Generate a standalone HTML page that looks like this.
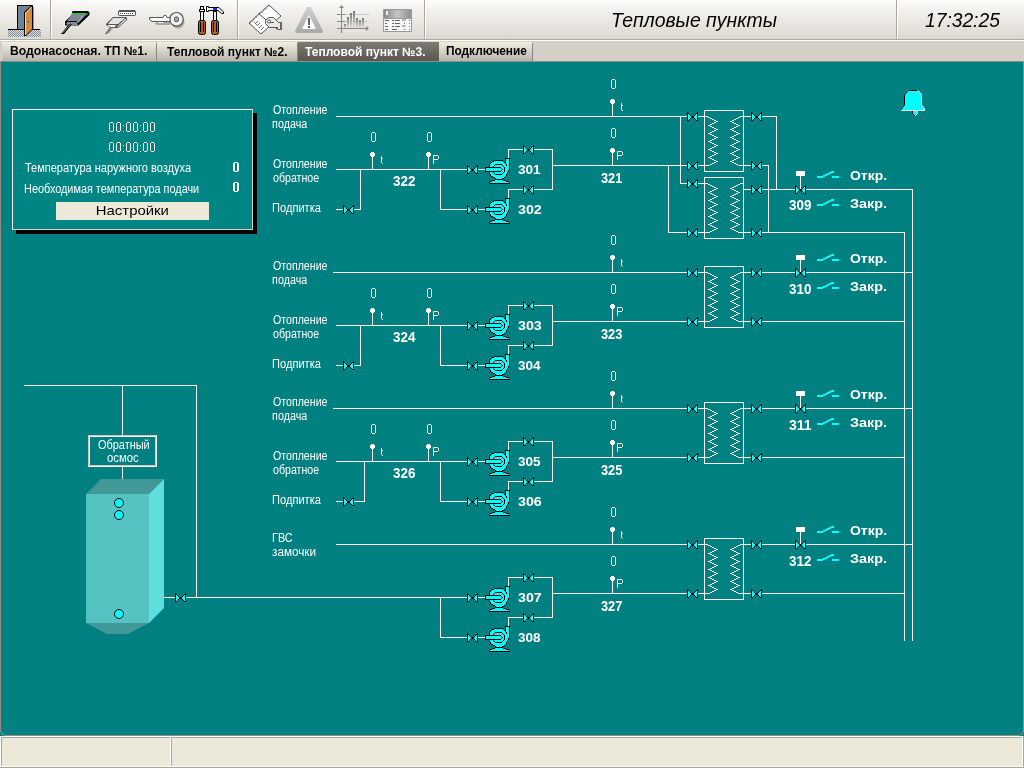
<!DOCTYPE html>
<html><head><meta charset="utf-8"><title>Тепловые пункты</title><style>
html,body{margin:0;padding:0;width:1024px;height:768px;overflow:hidden;background:#008080;}
svg{display:block;position:absolute;left:0;top:0;will-change:transform;}
text{font-family:"Liberation Sans",sans-serif;}
</style></head><body>
<svg width="1024" height="768" viewBox="0 0 1024 768">
<defs>
<linearGradient id="tbg" x1="0" y1="0" x2="0" y2="1">
<stop offset="0" stop-color="#fdfdfc"/><stop offset="0.1" stop-color="#f8f7f4"/><stop offset="1" stop-color="#dcd8d0"/>
</linearGradient>
<linearGradient id="tab" x1="0" y1="0" x2="0" y2="1">
<stop offset="0" stop-color="#f1eee0"/><stop offset="1" stop-color="#b8b5ad"/>
</linearGradient>
<linearGradient id="tabA" x1="0" y1="0" x2="0" y2="1">
<stop offset="0" stop-color="#7f7b73"/><stop offset="1" stop-color="#5a5650"/>
</linearGradient>
<pattern id="dith" x="0" y="0" width="2" height="2" patternUnits="userSpaceOnUse">
<rect x="0" y="0" width="1" height="1" fill="#7d8fa3"/><rect x="1" y="1" width="1" height="1" fill="#7d8fa3"/>
</pattern>
<g id="g0" fill="#fff"><rect x="1" y="0" width="3" height="1"/><rect x="0" y="1" width="1" height="8"/><rect x="4" y="1" width="1" height="8"/><rect x="1" y="9" width="3" height="1"/></g>
<g id="gcol" fill="#fff"><rect x="0" y="3" width="1" height="1"/><rect x="0" y="9" width="1" height="1"/></g>
<g id="gb0" fill="#fff"><rect x="1" y="0" width="4" height="1"/><rect x="0" y="1" width="2" height="8"/><rect x="4" y="1" width="2" height="8"/><rect x="1" y="9" width="4" height="1"/></g>
<g id="gt" fill="#fff"><rect x="0" y="0" width="1" height="7"/><rect x="1" y="2" width="1" height="1"/><rect x="1" y="7" width="1" height="1"/></g>
<g id="gP" fill="#fff"><rect x="0" y="0" width="1" height="9"/><rect x="1" y="0" width="4" height="1"/><rect x="5" y="1" width="1" height="3"/><rect x="1" y="4" width="4" height="1"/></g>
<g id="valve"><rect x="-5" y="-4" width="1" height="1" fill="#000"/><rect x="5" y="-4" width="1" height="1" fill="#000"/><rect x="-5" y="-3" width="2" height="1" fill="#000"/><rect x="4" y="-3" width="2" height="1" fill="#000"/><rect x="-5" y="-2" width="1" height="1" fill="#000"/><rect x="-4" y="-2" width="1" height="1" fill="#00ffff"/><rect x="-3" y="-2" width="1" height="1" fill="#000"/><rect x="3" y="-2" width="1" height="1" fill="#000"/><rect x="4" y="-2" width="1" height="1" fill="#00ffff"/><rect x="5" y="-2" width="1" height="1" fill="#000"/><rect x="-5" y="-1" width="1" height="1" fill="#000"/><rect x="-4" y="-1" width="2" height="1" fill="#00ffff"/><rect x="-2" y="-1" width="1" height="1" fill="#000"/><rect x="2" y="-1" width="1" height="1" fill="#000"/><rect x="3" y="-1" width="2" height="1" fill="#00ffff"/><rect x="5" y="-1" width="1" height="1" fill="#000"/><rect x="-5" y="0" width="1" height="1" fill="#000"/><rect x="-4" y="0" width="3" height="1" fill="#00ffff"/><rect x="-1" y="0" width="3" height="1" fill="#000"/><rect x="2" y="0" width="3" height="1" fill="#00ffff"/><rect x="5" y="0" width="1" height="1" fill="#000"/><rect x="-5" y="1" width="1" height="1" fill="#000"/><rect x="-4" y="1" width="3" height="1" fill="#00ffff"/><rect x="-1" y="1" width="3" height="1" fill="#000"/><rect x="2" y="1" width="3" height="1" fill="#00ffff"/><rect x="5" y="1" width="1" height="1" fill="#000"/><rect x="-5" y="2" width="1" height="1" fill="#000"/><rect x="-4" y="2" width="2" height="1" fill="#00ffff"/><rect x="-2" y="2" width="1" height="1" fill="#000"/><rect x="2" y="2" width="1" height="1" fill="#000"/><rect x="3" y="2" width="2" height="1" fill="#00ffff"/><rect x="5" y="2" width="1" height="1" fill="#000"/><rect x="-5" y="3" width="1" height="1" fill="#000"/><rect x="-4" y="3" width="1" height="1" fill="#00ffff"/><rect x="-3" y="3" width="1" height="1" fill="#000"/><rect x="3" y="3" width="1" height="1" fill="#000"/><rect x="4" y="3" width="1" height="1" fill="#00ffff"/><rect x="5" y="3" width="1" height="1" fill="#000"/><rect x="-5" y="4" width="2" height="1" fill="#000"/><rect x="4" y="4" width="2" height="1" fill="#000"/></g>
<g id="dot"><rect x="-1" y="-17" width="3" height="1" fill="#fff"/><rect x="-2" y="-16" width="5" height="3" fill="#fff"/><rect x="-1" y="-13" width="3" height="1" fill="#fff"/></g>
<g id="sw" fill="#00ffff"><rect x="817" y="0" width="6" height="2"/><rect x="823" y="-1" width="2" height="2"/><rect x="825" y="-2" width="2" height="2"/><rect x="827" y="-3" width="2" height="2"/><rect x="829" y="-4" width="2" height="2"/><rect x="831" y="-5" width="3" height="2"/><rect x="832" y="0" width="7" height="2"/></g>
<g id="pump"><rect x="20" y="0" width="5" height="1" fill="#000"/><rect x="20" y="1" width="1" height="1" fill="#000"/><rect x="21" y="1" width="3" height="1" fill="#00ffff"/><rect x="24" y="1" width="1" height="1" fill="#000"/><rect x="9" y="2" width="9" height="1" fill="#000"/><rect x="20" y="2" width="1" height="1" fill="#000"/><rect x="21" y="2" width="3" height="1" fill="#00ffff"/><rect x="24" y="2" width="1" height="1" fill="#000"/><rect x="7" y="3" width="2" height="1" fill="#000"/><rect x="9" y="3" width="9" height="1" fill="#00ffff"/><rect x="18" y="3" width="1" height="1" fill="#000"/><rect x="20" y="3" width="1" height="1" fill="#000"/><rect x="21" y="3" width="3" height="1" fill="#00ffff"/><rect x="24" y="3" width="1" height="1" fill="#000"/><rect x="6" y="4" width="1" height="1" fill="#000"/><rect x="7" y="4" width="12" height="1" fill="#00ffff"/><rect x="19" y="4" width="1" height="1" fill="#000"/><rect x="20" y="4" width="1" height="1" fill="#000"/><rect x="21" y="4" width="3" height="1" fill="#00ffff"/><rect x="24" y="4" width="1" height="1" fill="#000"/><rect x="5" y="5" width="1" height="1" fill="#000"/><rect x="6" y="5" width="14" height="1" fill="#00ffff"/><rect x="20" y="5" width="1" height="1" fill="#000"/><rect x="21" y="5" width="3" height="1" fill="#00ffff"/><rect x="24" y="5" width="1" height="1" fill="#000"/><rect x="4" y="6" width="1" height="1" fill="#000"/><rect x="5" y="6" width="5" height="1" fill="#00ffff"/><rect x="10" y="6" width="7" height="1" fill="#000"/><rect x="17" y="6" width="4" height="1" fill="#00ffff"/><rect x="21" y="6" width="1" height="1" fill="#000"/><rect x="22" y="6" width="2" height="1" fill="#00ffff"/><rect x="24" y="6" width="1" height="1" fill="#000"/><rect x="4" y="7" width="1" height="1" fill="#000"/><rect x="5" y="7" width="4" height="1" fill="#00ffff"/><rect x="9" y="7" width="1" height="1" fill="#000"/><rect x="10" y="7" width="7" height="1" fill="#00ffff"/><rect x="17" y="7" width="1" height="1" fill="#000"/><rect x="18" y="7" width="3" height="1" fill="#00ffff"/><rect x="21" y="7" width="1" height="1" fill="#000"/><rect x="22" y="7" width="2" height="1" fill="#00ffff"/><rect x="24" y="7" width="1" height="1" fill="#000"/><rect x="4" y="8" width="1" height="1" fill="#000"/><rect x="5" y="8" width="3" height="1" fill="#00ffff"/><rect x="8" y="8" width="1" height="1" fill="#000"/><rect x="9" y="8" width="9" height="1" fill="#00ffff"/><rect x="18" y="8" width="1" height="1" fill="#000"/><rect x="19" y="8" width="5" height="1" fill="#00ffff"/><rect x="24" y="8" width="1" height="1" fill="#000"/><rect x="0" y="9" width="16" height="1" fill="#000"/><rect x="16" y="9" width="3" height="1" fill="#00ffff"/><rect x="19" y="9" width="1" height="1" fill="#000"/><rect x="20" y="9" width="4" height="1" fill="#00ffff"/><rect x="24" y="9" width="1" height="1" fill="#000"/><rect x="0" y="10" width="1" height="1" fill="#000"/><rect x="1" y="10" width="15" height="1" fill="#00ffff"/><rect x="16" y="10" width="1" height="1" fill="#000"/><rect x="17" y="10" width="2" height="1" fill="#00ffff"/><rect x="19" y="10" width="1" height="1" fill="#000"/><rect x="20" y="10" width="4" height="1" fill="#00ffff"/><rect x="24" y="10" width="1" height="1" fill="#000"/><rect x="0" y="11" width="1" height="1" fill="#000"/><rect x="1" y="11" width="16" height="1" fill="#00ffff"/><rect x="17" y="11" width="1" height="1" fill="#000"/><rect x="18" y="11" width="1" height="1" fill="#00ffff"/><rect x="19" y="11" width="1" height="1" fill="#000"/><rect x="20" y="11" width="4" height="1" fill="#00ffff"/><rect x="24" y="11" width="1" height="1" fill="#000"/><rect x="0" y="12" width="1" height="1" fill="#000"/><rect x="1" y="12" width="15" height="1" fill="#00ffff"/><rect x="16" y="12" width="1" height="1" fill="#000"/><rect x="17" y="12" width="2" height="1" fill="#00ffff"/><rect x="19" y="12" width="1" height="1" fill="#000"/><rect x="20" y="12" width="3" height="1" fill="#00ffff"/><rect x="23" y="12" width="1" height="1" fill="#000"/><rect x="0" y="13" width="16" height="1" fill="#000"/><rect x="16" y="13" width="3" height="1" fill="#00ffff"/><rect x="19" y="13" width="1" height="1" fill="#000"/><rect x="20" y="13" width="3" height="1" fill="#00ffff"/><rect x="23" y="13" width="1" height="1" fill="#000"/><rect x="4" y="14" width="1" height="1" fill="#000"/><rect x="5" y="14" width="3" height="1" fill="#00ffff"/><rect x="8" y="14" width="1" height="1" fill="#000"/><rect x="9" y="14" width="9" height="1" fill="#00ffff"/><rect x="18" y="14" width="1" height="1" fill="#000"/><rect x="19" y="14" width="3" height="1" fill="#00ffff"/><rect x="22" y="14" width="1" height="1" fill="#000"/><rect x="4" y="15" width="1" height="1" fill="#000"/><rect x="5" y="15" width="4" height="1" fill="#00ffff"/><rect x="9" y="15" width="1" height="1" fill="#000"/><rect x="10" y="15" width="7" height="1" fill="#00ffff"/><rect x="17" y="15" width="1" height="1" fill="#000"/><rect x="18" y="15" width="4" height="1" fill="#00ffff"/><rect x="22" y="15" width="1" height="1" fill="#000"/><rect x="5" y="16" width="1" height="1" fill="#000"/><rect x="6" y="16" width="4" height="1" fill="#00ffff"/><rect x="10" y="16" width="7" height="1" fill="#000"/><rect x="17" y="16" width="4" height="1" fill="#00ffff"/><rect x="21" y="16" width="1" height="1" fill="#000"/><rect x="5" y="17" width="1" height="1" fill="#000"/><rect x="6" y="17" width="15" height="1" fill="#00ffff"/><rect x="21" y="17" width="1" height="1" fill="#000"/><rect x="6" y="18" width="2" height="1" fill="#000"/><rect x="8" y="18" width="12" height="1" fill="#00ffff"/><rect x="20" y="18" width="1" height="1" fill="#000"/><rect x="8" y="19" width="2" height="1" fill="#000"/><rect x="10" y="19" width="9" height="1" fill="#00ffff"/><rect x="19" y="19" width="1" height="1" fill="#000"/><rect x="10" y="20" width="1" height="1" fill="#000"/><rect x="11" y="20" width="6" height="1" fill="#00ffff"/><rect x="17" y="20" width="2" height="1" fill="#000"/><rect x="10" y="21" width="8" height="1" fill="#000"/><rect x="7" y="22" width="3" height="1" fill="#000"/><rect x="10" y="22" width="8" height="1" fill="#00ffff"/><rect x="18" y="22" width="3" height="1" fill="#000"/><rect x="5" y="23" width="2" height="1" fill="#000"/><rect x="7" y="23" width="14" height="1" fill="#00ffff"/><rect x="21" y="23" width="3" height="1" fill="#000"/><rect x="4" y="24" width="1" height="1" fill="#000"/><rect x="5" y="24" width="19" height="1" fill="#00ffff"/><rect x="24" y="24" width="1" height="1" fill="#000"/><rect x="4" y="25" width="21" height="1" fill="#000"/></g>
</defs>
<g opacity="0.999">

<rect x="0" y="0" width="1024" height="39" fill="url(#tbg)"/>
<rect x="0" y="39" width="1024" height="1" fill="#aca89e"/>
<rect x="0" y="40" width="1024" height="1" fill="#ffffff"/>
<rect x="50" y="0" width="1" height="39" fill="#aca89e"/>
<rect x="51" y="0" width="1" height="39" fill="#ffffff"/>
<rect x="237" y="0" width="1" height="39" fill="#aca89e"/>
<rect x="238" y="0" width="1" height="39" fill="#ffffff"/>
<rect x="424" y="0" width="1" height="39" fill="#aca89e"/>
<rect x="425" y="0" width="1" height="39" fill="#ffffff"/>
<rect x="896" y="0" width="1" height="39" fill="#aca89e"/>
<rect x="897" y="0" width="1" height="39" fill="#ffffff"/>
<text x="611.06" y="27" font-size="20" font-weight="normal" font-style="italic" fill="#000" textLength="165.93" lengthAdjust="spacingAndGlyphs">Тепловые пункты</text>
<text x="925.0" y="27" font-size="20" font-weight="normal" font-style="italic" fill="#000" textLength="74.86" lengthAdjust="spacingAndGlyphs">17:32:25</text>
<rect x="0" y="41" width="1024" height="20" fill="#d4d0c8"/>
<rect x="2" y="42" width="154" height="19" fill="url(#tab)"/>
<rect x="156" y="43" width="1" height="18" fill="#888886"/>
<text x="9.99" y="55" font-size="12" font-weight="bold" font-style="normal" fill="#000" textLength="137.52" lengthAdjust="spacingAndGlyphs">Водонасосная. ТП №1.</text>
<rect x="157" y="42" width="140" height="19" fill="url(#tab)"/>
<rect x="297" y="43" width="1" height="18" fill="#888886"/>
<text x="167.0" y="56" font-size="12" font-weight="bold" font-style="normal" fill="#000" textLength="120.48" lengthAdjust="spacingAndGlyphs">Тепловой пункт №2.</text>
<rect x="298" y="42" width="141" height="19" fill="url(#tabA)"/>
<text x="305.0" y="56" font-size="12" font-weight="bold" font-style="normal" fill="#fff" textLength="120.48" lengthAdjust="spacingAndGlyphs">Тепловой пункт №3.</text>
<rect x="439" y="42" width="93" height="19" fill="url(#tab)"/>
<rect x="532" y="43" width="1" height="18" fill="#888886"/>
<text x="446.01" y="55" font-size="12" font-weight="bold" font-style="normal" fill="#000" textLength="80.91" lengthAdjust="spacingAndGlyphs">Подключение</text>
<rect x="0" y="61" width="1024" height="1" fill="#978b88"/>
<rect x="0" y="61" width="1" height="671" fill="#978b88"/>
<rect x="1023" y="61" width="1" height="671" fill="#978b88"/>
<rect x="1" y="732" width="1" height="2" fill="#978b88"/><rect x="2" y="734" width="2" height="1" fill="#978b88"/>
<rect x="1022" y="732" width="1" height="2" fill="#978b88"/><rect x="1020" y="734" width="2" height="1" fill="#978b88"/>
<rect x="4" y="735" width="1016" height="1" fill="#978b88"/>
<rect x="0" y="736" width="1024" height="32" fill="#ffffff"/>
<rect x="1" y="737" width="169" height="29" fill="#aca899"/>
<rect x="2" y="738" width="168" height="28" fill="#ece9d8"/>
<rect x="171" y="737" width="851" height="29" fill="#aca899"/>
<rect x="172" y="738" width="850" height="28" fill="#ece9d8"/>
<rect x="0" y="767" width="1024" height="1" fill="#aca899"/>
<rect x="1023" y="736" width="1" height="32" fill="#aca899"/>
<rect x="16" y="113" width="241" height="121" fill="#000"/>
<rect x="12" y="109" width="241" height="121" fill="#008585"/>
<rect x="12" y="109" width="241" height="1" fill="#fff"/>
<rect x="12" y="109" width="1" height="121" fill="#fff"/>
<rect x="12" y="229" width="241" height="1" fill="#d8cfc0"/>
<rect x="252" y="109" width="1" height="121" fill="#d8cfc0"/>
<text x="25.0" y="172" font-size="12" font-weight="normal" font-style="normal" fill="#ffffff" textLength="166.0" lengthAdjust="spacingAndGlyphs">Температура наружного воздуха</text>
<text x="24.09" y="193" font-size="12" font-weight="normal" font-style="normal" fill="#ffffff" textLength="175.1" lengthAdjust="spacingAndGlyphs">Необходимая температура подачи</text>
<use href="#g0" x="109" y="122"/>
<use href="#g0" x="116" y="122"/>
<use href="#g0" x="126" y="122"/>
<use href="#g0" x="133" y="122"/>
<use href="#g0" x="143" y="122"/>
<use href="#g0" x="150" y="122"/>
<use href="#gcol" x="123" y="122"/>
<use href="#gcol" x="140" y="122"/>
<use href="#g0" x="109" y="142"/>
<use href="#g0" x="116" y="142"/>
<use href="#g0" x="126" y="142"/>
<use href="#g0" x="133" y="142"/>
<use href="#g0" x="143" y="142"/>
<use href="#g0" x="150" y="142"/>
<use href="#gcol" x="123" y="142"/>
<use href="#gcol" x="140" y="142"/>
<use href="#gb0" x="233" y="162"/>
<use href="#gb0" x="233" y="182"/>
<rect x="56" y="202" width="153" height="18" fill="#ece9d8"/>
<text x="95.85" y="215" font-size="13" font-weight="normal" font-style="normal" fill="#000" textLength="73.0" lengthAdjust="spacingAndGlyphs">Настройки</text>
<polygon points="908,90 918,90 922,95 922,105 925,109 925,111 901,111 901,109 904,105 904,95" fill="#00ffff"/>
<polyline points="901.5,111 901.5,109 904.5,105 904.5,95 908.5,90.5 918,90.5" fill="none" stroke="#000"/>
<polyline points="918,90.5 921.5,94.5 921.5,105 924.5,108.5 924.5,110.5 901,110.5" fill="none" stroke="#fff"/>
<polygon points="912,111 918,111 918,113 915,116 912,113" fill="#00ffff"/><polyline points="912.5,111 912.5,113.5 915,116" fill="none" stroke="#000"/><polyline points="917.5,111 917.5,113.5 915,116" fill="none" stroke="#fff"/>
<text x="273.0" y="114" font-size="12" font-weight="normal" font-style="normal" fill="#ffffff" textLength="54.48" lengthAdjust="spacingAndGlyphs">Отопление</text>
<text x="272.11" y="128" font-size="12" font-weight="normal" font-style="normal" fill="#ffffff" textLength="35.12" lengthAdjust="spacingAndGlyphs">подача</text>
<text x="273.0" y="168" font-size="12" font-weight="normal" font-style="normal" fill="#ffffff" textLength="54.48" lengthAdjust="spacingAndGlyphs">Отопление</text>
<text x="273.0" y="182" font-size="12" font-weight="normal" font-style="normal" fill="#ffffff" textLength="46.1" lengthAdjust="spacingAndGlyphs">обратное</text>
<text x="272.08" y="212" font-size="12" font-weight="normal" font-style="normal" fill="#ffffff" textLength="48.85" lengthAdjust="spacingAndGlyphs">Подпитка</text>
<text x="393.0" y="186" font-size="14" font-weight="bold" font-style="normal" fill="#ffffff" textLength="22.34" lengthAdjust="spacingAndGlyphs">322</text>
<rect x="336" y="209" width="25" height="1" fill="#ffffff"/>
<rect x="360" y="169" width="1" height="41" fill="#ffffff"/>
<use href="#valve" x="348" y="209"/>
<rect x="336" y="169" width="150" height="1" fill="#ffffff"/>
<rect x="440" y="169" width="1" height="41" fill="#ffffff"/>
<rect x="440" y="209" width="46" height="1" fill="#ffffff"/>
<use href="#valve" x="472" y="169"/>
<use href="#valve" x="472" y="209"/>
<rect x="508" y="149" width="1" height="9" fill="#ffffff"/>
<rect x="508" y="149" width="45" height="1" fill="#ffffff"/>
<rect x="508" y="189" width="1" height="9" fill="#ffffff"/>
<rect x="508" y="189" width="45" height="1" fill="#ffffff"/>
<rect x="552" y="149" width="1" height="41" fill="#ffffff"/>
<use href="#valve" x="528" y="149"/>
<use href="#valve" x="528" y="189"/>
<use href="#pump" x="485" y="158"/>
<use href="#pump" x="485" y="198"/>
<text x="518.0" y="174" font-size="13" font-weight="bold" font-style="normal" fill="#ffffff" textLength="22.69" lengthAdjust="spacingAndGlyphs">301</text>
<text x="518.0" y="214" font-size="13" font-weight="bold" font-style="normal" fill="#ffffff" textLength="23.77" lengthAdjust="spacingAndGlyphs">302</text>
<use href="#dot" x="372" y="169"/>
<rect x="372" y="157" width="1" height="13" fill="#ffffff"/>
<use href="#g0" x="371" y="132"/>
<use href="#gt" x="381" y="156"/>
<use href="#dot" x="428" y="169"/>
<rect x="428" y="157" width="1" height="13" fill="#ffffff"/>
<use href="#g0" x="427" y="132"/>
<use href="#gP" x="433" y="155"/>
<text x="601.0" y="183" font-size="14" font-weight="bold" font-style="normal" fill="#ffffff" textLength="21.33" lengthAdjust="spacingAndGlyphs">321</text>
<rect x="336" y="116" width="369" height="1" fill="#ffffff"/>
<rect x="552" y="165" width="153" height="1" fill="#ffffff"/>
<use href="#dot" x="612" y="116"/>
<rect x="612" y="104" width="1" height="13" fill="#ffffff"/>
<use href="#g0" x="611" y="79"/>
<use href="#gt" x="621" y="103"/>
<use href="#dot" x="612" y="165"/>
<rect x="612" y="153" width="1" height="13" fill="#ffffff"/>
<use href="#g0" x="611" y="128"/>
<use href="#gP" x="617" y="151"/>
<rect x="680" y="116" width="1" height="68" fill="#ffffff"/>
<rect x="680" y="183" width="25" height="1" fill="#ffffff"/>
<rect x="668" y="165" width="1" height="68" fill="#ffffff"/>
<rect x="668" y="232" width="37" height="1" fill="#ffffff"/>
<use href="#valve" x="692" y="116"/>
<use href="#valve" x="692" y="165"/>
<use href="#valve" x="692" y="183"/>
<use href="#valve" x="692" y="232"/>
<rect x="704.5" y="110.5" width="39" height="61" fill="none" stroke="#ffffff" stroke-width="1"/>
<g fill="#fff"><rect x="705" y="116" width="3" height="1"/><rect x="740" y="116" width="3" height="1"/><rect x="708" y="117" width="2" height="1"/><rect x="738" y="117" width="2" height="1"/><rect x="710" y="118" width="2" height="1"/><rect x="736" y="118" width="2" height="1"/><rect x="712" y="119" width="2" height="1"/><rect x="734" y="119" width="2" height="1"/><rect x="714" y="120" width="2" height="1"/><rect x="732" y="120" width="2" height="1"/><rect x="716" y="121" width="2" height="1"/><rect x="730" y="121" width="2" height="1"/><rect x="714" y="122" width="2" height="1"/><rect x="732" y="122" width="2" height="1"/><rect x="712" y="123" width="2" height="1"/><rect x="734" y="123" width="2" height="1"/><rect x="710" y="124" width="2" height="1"/><rect x="736" y="124" width="2" height="1"/><rect x="708" y="125" width="2" height="1"/><rect x="738" y="125" width="2" height="1"/><rect x="710" y="126" width="2" height="1"/><rect x="736" y="126" width="2" height="1"/><rect x="712" y="127" width="2" height="1"/><rect x="734" y="127" width="2" height="1"/><rect x="714" y="128" width="2" height="1"/><rect x="732" y="128" width="2" height="1"/><rect x="716" y="129" width="2" height="1"/><rect x="730" y="129" width="2" height="1"/><rect x="714" y="130" width="2" height="1"/><rect x="732" y="130" width="2" height="1"/><rect x="712" y="131" width="2" height="1"/><rect x="734" y="131" width="2" height="1"/><rect x="710" y="132" width="2" height="1"/><rect x="736" y="132" width="2" height="1"/><rect x="708" y="133" width="2" height="1"/><rect x="738" y="133" width="2" height="1"/><rect x="710" y="134" width="2" height="1"/><rect x="736" y="134" width="2" height="1"/><rect x="712" y="135" width="2" height="1"/><rect x="734" y="135" width="2" height="1"/><rect x="714" y="136" width="2" height="1"/><rect x="732" y="136" width="2" height="1"/><rect x="716" y="137" width="2" height="1"/><rect x="730" y="137" width="2" height="1"/><rect x="714" y="138" width="2" height="1"/><rect x="732" y="138" width="2" height="1"/><rect x="712" y="139" width="2" height="1"/><rect x="734" y="139" width="2" height="1"/><rect x="710" y="140" width="2" height="1"/><rect x="736" y="140" width="2" height="1"/><rect x="708" y="141" width="2" height="1"/><rect x="738" y="141" width="2" height="1"/><rect x="710" y="142" width="2" height="1"/><rect x="736" y="142" width="2" height="1"/><rect x="712" y="143" width="2" height="1"/><rect x="734" y="143" width="2" height="1"/><rect x="714" y="144" width="2" height="1"/><rect x="732" y="144" width="2" height="1"/><rect x="716" y="145" width="2" height="1"/><rect x="730" y="145" width="2" height="1"/><rect x="714" y="146" width="2" height="1"/><rect x="732" y="146" width="2" height="1"/><rect x="712" y="147" width="2" height="1"/><rect x="734" y="147" width="2" height="1"/><rect x="710" y="148" width="2" height="1"/><rect x="736" y="148" width="2" height="1"/><rect x="708" y="149" width="2" height="1"/><rect x="738" y="149" width="2" height="1"/><rect x="710" y="150" width="2" height="1"/><rect x="736" y="150" width="2" height="1"/><rect x="712" y="151" width="2" height="1"/><rect x="734" y="151" width="2" height="1"/><rect x="714" y="152" width="2" height="1"/><rect x="732" y="152" width="2" height="1"/><rect x="716" y="153" width="2" height="1"/><rect x="730" y="153" width="2" height="1"/><rect x="714" y="154" width="2" height="1"/><rect x="732" y="154" width="2" height="1"/><rect x="712" y="155" width="2" height="1"/><rect x="734" y="155" width="2" height="1"/><rect x="710" y="156" width="2" height="1"/><rect x="736" y="156" width="2" height="1"/><rect x="708" y="157" width="2" height="1"/><rect x="738" y="157" width="2" height="1"/><rect x="710" y="158" width="2" height="1"/><rect x="736" y="158" width="2" height="1"/><rect x="712" y="159" width="2" height="1"/><rect x="734" y="159" width="2" height="1"/><rect x="714" y="160" width="2" height="1"/><rect x="732" y="160" width="2" height="1"/><rect x="716" y="161" width="2" height="1"/><rect x="730" y="161" width="2" height="1"/><rect x="714" y="162" width="2" height="1"/><rect x="732" y="162" width="2" height="1"/><rect x="712" y="163" width="2" height="1"/><rect x="734" y="163" width="2" height="1"/><rect x="710" y="164" width="2" height="1"/><rect x="736" y="164" width="2" height="1"/><rect x="705" y="165" width="5" height="1"/><rect x="738" y="165" width="5" height="1"/></g>
<rect x="704.5" y="177.5" width="39" height="61" fill="none" stroke="#ffffff" stroke-width="1"/>
<g fill="#fff"><rect x="705" y="183" width="3" height="1"/><rect x="740" y="183" width="3" height="1"/><rect x="708" y="184" width="2" height="1"/><rect x="738" y="184" width="2" height="1"/><rect x="710" y="185" width="2" height="1"/><rect x="736" y="185" width="2" height="1"/><rect x="712" y="186" width="2" height="1"/><rect x="734" y="186" width="2" height="1"/><rect x="714" y="187" width="2" height="1"/><rect x="732" y="187" width="2" height="1"/><rect x="716" y="188" width="2" height="1"/><rect x="730" y="188" width="2" height="1"/><rect x="714" y="189" width="2" height="1"/><rect x="732" y="189" width="2" height="1"/><rect x="712" y="190" width="2" height="1"/><rect x="734" y="190" width="2" height="1"/><rect x="710" y="191" width="2" height="1"/><rect x="736" y="191" width="2" height="1"/><rect x="708" y="192" width="2" height="1"/><rect x="738" y="192" width="2" height="1"/><rect x="710" y="193" width="2" height="1"/><rect x="736" y="193" width="2" height="1"/><rect x="712" y="194" width="2" height="1"/><rect x="734" y="194" width="2" height="1"/><rect x="714" y="195" width="2" height="1"/><rect x="732" y="195" width="2" height="1"/><rect x="716" y="196" width="2" height="1"/><rect x="730" y="196" width="2" height="1"/><rect x="714" y="197" width="2" height="1"/><rect x="732" y="197" width="2" height="1"/><rect x="712" y="198" width="2" height="1"/><rect x="734" y="198" width="2" height="1"/><rect x="710" y="199" width="2" height="1"/><rect x="736" y="199" width="2" height="1"/><rect x="708" y="200" width="2" height="1"/><rect x="738" y="200" width="2" height="1"/><rect x="710" y="201" width="2" height="1"/><rect x="736" y="201" width="2" height="1"/><rect x="712" y="202" width="2" height="1"/><rect x="734" y="202" width="2" height="1"/><rect x="714" y="203" width="2" height="1"/><rect x="732" y="203" width="2" height="1"/><rect x="716" y="204" width="2" height="1"/><rect x="730" y="204" width="2" height="1"/><rect x="714" y="205" width="2" height="1"/><rect x="732" y="205" width="2" height="1"/><rect x="712" y="206" width="2" height="1"/><rect x="734" y="206" width="2" height="1"/><rect x="710" y="207" width="2" height="1"/><rect x="736" y="207" width="2" height="1"/><rect x="708" y="208" width="2" height="1"/><rect x="738" y="208" width="2" height="1"/><rect x="710" y="209" width="2" height="1"/><rect x="736" y="209" width="2" height="1"/><rect x="712" y="210" width="2" height="1"/><rect x="734" y="210" width="2" height="1"/><rect x="714" y="211" width="2" height="1"/><rect x="732" y="211" width="2" height="1"/><rect x="716" y="212" width="2" height="1"/><rect x="730" y="212" width="2" height="1"/><rect x="714" y="213" width="2" height="1"/><rect x="732" y="213" width="2" height="1"/><rect x="712" y="214" width="2" height="1"/><rect x="734" y="214" width="2" height="1"/><rect x="710" y="215" width="2" height="1"/><rect x="736" y="215" width="2" height="1"/><rect x="708" y="216" width="2" height="1"/><rect x="738" y="216" width="2" height="1"/><rect x="710" y="217" width="2" height="1"/><rect x="736" y="217" width="2" height="1"/><rect x="712" y="218" width="2" height="1"/><rect x="734" y="218" width="2" height="1"/><rect x="714" y="219" width="2" height="1"/><rect x="732" y="219" width="2" height="1"/><rect x="716" y="220" width="2" height="1"/><rect x="730" y="220" width="2" height="1"/><rect x="714" y="221" width="2" height="1"/><rect x="732" y="221" width="2" height="1"/><rect x="712" y="222" width="2" height="1"/><rect x="734" y="222" width="2" height="1"/><rect x="710" y="223" width="2" height="1"/><rect x="736" y="223" width="2" height="1"/><rect x="708" y="224" width="2" height="1"/><rect x="738" y="224" width="2" height="1"/><rect x="710" y="225" width="2" height="1"/><rect x="736" y="225" width="2" height="1"/><rect x="712" y="226" width="2" height="1"/><rect x="734" y="226" width="2" height="1"/><rect x="714" y="227" width="2" height="1"/><rect x="732" y="227" width="2" height="1"/><rect x="716" y="228" width="2" height="1"/><rect x="730" y="228" width="2" height="1"/><rect x="714" y="229" width="2" height="1"/><rect x="732" y="229" width="2" height="1"/><rect x="712" y="230" width="2" height="1"/><rect x="734" y="230" width="2" height="1"/><rect x="710" y="231" width="2" height="1"/><rect x="736" y="231" width="2" height="1"/><rect x="705" y="232" width="5" height="1"/><rect x="738" y="232" width="5" height="1"/></g>
<rect x="743" y="116" width="34" height="1" fill="#ffffff"/>
<rect x="776" y="116" width="1" height="74" fill="#ffffff"/>
<rect x="743" y="165" width="26" height="1" fill="#ffffff"/>
<rect x="768" y="165" width="1" height="68" fill="#ffffff"/>
<rect x="743" y="189" width="170" height="1" fill="#ffffff"/>
<rect x="743" y="232" width="162" height="1" fill="#ffffff"/>
<use href="#valve" x="756" y="116"/>
<use href="#valve" x="756" y="165"/>
<use href="#valve" x="756" y="189"/>
<use href="#valve" x="756" y="232"/>
<rect x="800" y="176" width="1" height="13" fill="#ffffff"/>
<rect x="796" y="171" width="9" height="5" fill="#ffffff"/>
<use href="#valve" x="800" y="189"/>
<use href="#sw" x="0" y="176"/>
<use href="#sw" x="0" y="204"/>
<text x="789.0" y="210" font-size="14" font-weight="bold" font-style="normal" fill="#ffffff" textLength="22.34" lengthAdjust="spacingAndGlyphs">309</text>
<text x="850.0" y="180" font-size="12" font-weight="bold" font-style="normal" fill="#ffffff" textLength="37.03" lengthAdjust="spacingAndGlyphs">Откр.</text>
<text x="850.0" y="208" font-size="12" font-weight="bold" font-style="normal" fill="#ffffff" textLength="37.05" lengthAdjust="spacingAndGlyphs">Закр.</text>
<text x="273.0" y="270" font-size="12" font-weight="normal" font-style="normal" fill="#ffffff" textLength="54.48" lengthAdjust="spacingAndGlyphs">Отопление</text>
<text x="272.11" y="284" font-size="12" font-weight="normal" font-style="normal" fill="#ffffff" textLength="35.12" lengthAdjust="spacingAndGlyphs">подача</text>
<text x="273.0" y="324" font-size="12" font-weight="normal" font-style="normal" fill="#ffffff" textLength="54.48" lengthAdjust="spacingAndGlyphs">Отопление</text>
<text x="273.0" y="338" font-size="12" font-weight="normal" font-style="normal" fill="#ffffff" textLength="46.1" lengthAdjust="spacingAndGlyphs">обратное</text>
<text x="272.08" y="368" font-size="12" font-weight="normal" font-style="normal" fill="#ffffff" textLength="48.85" lengthAdjust="spacingAndGlyphs">Подпитка</text>
<text x="393.0" y="342" font-size="14" font-weight="bold" font-style="normal" fill="#ffffff" textLength="22.34" lengthAdjust="spacingAndGlyphs">324</text>
<rect x="336" y="365" width="25" height="1" fill="#ffffff"/>
<rect x="360" y="325" width="1" height="41" fill="#ffffff"/>
<use href="#valve" x="348" y="365"/>
<rect x="336" y="325" width="150" height="1" fill="#ffffff"/>
<rect x="440" y="325" width="1" height="41" fill="#ffffff"/>
<rect x="440" y="365" width="46" height="1" fill="#ffffff"/>
<use href="#valve" x="472" y="325"/>
<use href="#valve" x="472" y="365"/>
<rect x="508" y="305" width="1" height="9" fill="#ffffff"/>
<rect x="508" y="305" width="45" height="1" fill="#ffffff"/>
<rect x="508" y="345" width="1" height="9" fill="#ffffff"/>
<rect x="508" y="345" width="45" height="1" fill="#ffffff"/>
<rect x="552" y="305" width="1" height="41" fill="#ffffff"/>
<use href="#valve" x="528" y="305"/>
<use href="#valve" x="528" y="345"/>
<use href="#pump" x="485" y="314"/>
<use href="#pump" x="485" y="354"/>
<text x="518.0" y="330" font-size="13" font-weight="bold" font-style="normal" fill="#ffffff" textLength="23.77" lengthAdjust="spacingAndGlyphs">303</text>
<text x="518.0" y="370" font-size="13" font-weight="bold" font-style="normal" fill="#ffffff" textLength="22.69" lengthAdjust="spacingAndGlyphs">304</text>
<use href="#dot" x="372" y="325"/>
<rect x="372" y="313" width="1" height="13" fill="#ffffff"/>
<use href="#g0" x="371" y="288"/>
<use href="#gt" x="381" y="312"/>
<use href="#dot" x="428" y="325"/>
<rect x="428" y="313" width="1" height="13" fill="#ffffff"/>
<use href="#g0" x="427" y="288"/>
<use href="#gP" x="433" y="311"/>
<text x="601.0" y="339" font-size="14" font-weight="bold" font-style="normal" fill="#ffffff" textLength="21.33" lengthAdjust="spacingAndGlyphs">323</text>
<rect x="333" y="272" width="372" height="1" fill="#ffffff"/>
<rect x="552" y="321" width="153" height="1" fill="#ffffff"/>
<use href="#dot" x="612" y="272"/>
<rect x="612" y="260" width="1" height="13" fill="#ffffff"/>
<use href="#g0" x="611" y="235"/>
<use href="#gt" x="621" y="259"/>
<use href="#dot" x="612" y="321"/>
<rect x="612" y="309" width="1" height="13" fill="#ffffff"/>
<use href="#g0" x="611" y="284"/>
<use href="#gP" x="617" y="307"/>
<rect x="704.5" y="266.5" width="39" height="61" fill="none" stroke="#ffffff" stroke-width="1"/>
<g fill="#fff"><rect x="705" y="272" width="3" height="1"/><rect x="740" y="272" width="3" height="1"/><rect x="708" y="273" width="2" height="1"/><rect x="738" y="273" width="2" height="1"/><rect x="710" y="274" width="2" height="1"/><rect x="736" y="274" width="2" height="1"/><rect x="712" y="275" width="2" height="1"/><rect x="734" y="275" width="2" height="1"/><rect x="714" y="276" width="2" height="1"/><rect x="732" y="276" width="2" height="1"/><rect x="716" y="277" width="2" height="1"/><rect x="730" y="277" width="2" height="1"/><rect x="714" y="278" width="2" height="1"/><rect x="732" y="278" width="2" height="1"/><rect x="712" y="279" width="2" height="1"/><rect x="734" y="279" width="2" height="1"/><rect x="710" y="280" width="2" height="1"/><rect x="736" y="280" width="2" height="1"/><rect x="708" y="281" width="2" height="1"/><rect x="738" y="281" width="2" height="1"/><rect x="710" y="282" width="2" height="1"/><rect x="736" y="282" width="2" height="1"/><rect x="712" y="283" width="2" height="1"/><rect x="734" y="283" width="2" height="1"/><rect x="714" y="284" width="2" height="1"/><rect x="732" y="284" width="2" height="1"/><rect x="716" y="285" width="2" height="1"/><rect x="730" y="285" width="2" height="1"/><rect x="714" y="286" width="2" height="1"/><rect x="732" y="286" width="2" height="1"/><rect x="712" y="287" width="2" height="1"/><rect x="734" y="287" width="2" height="1"/><rect x="710" y="288" width="2" height="1"/><rect x="736" y="288" width="2" height="1"/><rect x="708" y="289" width="2" height="1"/><rect x="738" y="289" width="2" height="1"/><rect x="710" y="290" width="2" height="1"/><rect x="736" y="290" width="2" height="1"/><rect x="712" y="291" width="2" height="1"/><rect x="734" y="291" width="2" height="1"/><rect x="714" y="292" width="2" height="1"/><rect x="732" y="292" width="2" height="1"/><rect x="716" y="293" width="2" height="1"/><rect x="730" y="293" width="2" height="1"/><rect x="714" y="294" width="2" height="1"/><rect x="732" y="294" width="2" height="1"/><rect x="712" y="295" width="2" height="1"/><rect x="734" y="295" width="2" height="1"/><rect x="710" y="296" width="2" height="1"/><rect x="736" y="296" width="2" height="1"/><rect x="708" y="297" width="2" height="1"/><rect x="738" y="297" width="2" height="1"/><rect x="710" y="298" width="2" height="1"/><rect x="736" y="298" width="2" height="1"/><rect x="712" y="299" width="2" height="1"/><rect x="734" y="299" width="2" height="1"/><rect x="714" y="300" width="2" height="1"/><rect x="732" y="300" width="2" height="1"/><rect x="716" y="301" width="2" height="1"/><rect x="730" y="301" width="2" height="1"/><rect x="714" y="302" width="2" height="1"/><rect x="732" y="302" width="2" height="1"/><rect x="712" y="303" width="2" height="1"/><rect x="734" y="303" width="2" height="1"/><rect x="710" y="304" width="2" height="1"/><rect x="736" y="304" width="2" height="1"/><rect x="708" y="305" width="2" height="1"/><rect x="738" y="305" width="2" height="1"/><rect x="710" y="306" width="2" height="1"/><rect x="736" y="306" width="2" height="1"/><rect x="712" y="307" width="2" height="1"/><rect x="734" y="307" width="2" height="1"/><rect x="714" y="308" width="2" height="1"/><rect x="732" y="308" width="2" height="1"/><rect x="716" y="309" width="2" height="1"/><rect x="730" y="309" width="2" height="1"/><rect x="714" y="310" width="2" height="1"/><rect x="732" y="310" width="2" height="1"/><rect x="712" y="311" width="2" height="1"/><rect x="734" y="311" width="2" height="1"/><rect x="710" y="312" width="2" height="1"/><rect x="736" y="312" width="2" height="1"/><rect x="708" y="313" width="2" height="1"/><rect x="738" y="313" width="2" height="1"/><rect x="710" y="314" width="2" height="1"/><rect x="736" y="314" width="2" height="1"/><rect x="712" y="315" width="2" height="1"/><rect x="734" y="315" width="2" height="1"/><rect x="714" y="316" width="2" height="1"/><rect x="732" y="316" width="2" height="1"/><rect x="716" y="317" width="2" height="1"/><rect x="730" y="317" width="2" height="1"/><rect x="714" y="318" width="2" height="1"/><rect x="732" y="318" width="2" height="1"/><rect x="712" y="319" width="2" height="1"/><rect x="734" y="319" width="2" height="1"/><rect x="710" y="320" width="2" height="1"/><rect x="736" y="320" width="2" height="1"/><rect x="705" y="321" width="5" height="1"/><rect x="738" y="321" width="5" height="1"/></g>
<use href="#valve" x="692" y="272"/>
<use href="#valve" x="692" y="321"/>
<rect x="743" y="272" width="170" height="1" fill="#ffffff"/>
<rect x="743" y="321" width="162" height="1" fill="#ffffff"/>
<use href="#valve" x="756" y="272"/>
<use href="#valve" x="756" y="321"/>
<rect x="800" y="260" width="1" height="12" fill="#ffffff"/>
<rect x="796" y="255" width="9" height="5" fill="#ffffff"/>
<use href="#valve" x="800" y="272"/>
<use href="#sw" x="0" y="259"/>
<use href="#sw" x="0" y="287"/>
<text x="789.0" y="294" font-size="14" font-weight="bold" font-style="normal" fill="#ffffff" textLength="22.34" lengthAdjust="spacingAndGlyphs">310</text>
<text x="850.0" y="263" font-size="12" font-weight="bold" font-style="normal" fill="#ffffff" textLength="37.03" lengthAdjust="spacingAndGlyphs">Откр.</text>
<text x="850.0" y="291" font-size="12" font-weight="bold" font-style="normal" fill="#ffffff" textLength="37.05" lengthAdjust="spacingAndGlyphs">Закр.</text>
<text x="273.0" y="406" font-size="12" font-weight="normal" font-style="normal" fill="#ffffff" textLength="54.48" lengthAdjust="spacingAndGlyphs">Отопление</text>
<text x="272.11" y="420" font-size="12" font-weight="normal" font-style="normal" fill="#ffffff" textLength="35.12" lengthAdjust="spacingAndGlyphs">подача</text>
<text x="273.0" y="460" font-size="12" font-weight="normal" font-style="normal" fill="#ffffff" textLength="54.48" lengthAdjust="spacingAndGlyphs">Отопление</text>
<text x="273.0" y="474" font-size="12" font-weight="normal" font-style="normal" fill="#ffffff" textLength="46.1" lengthAdjust="spacingAndGlyphs">обратное</text>
<text x="272.08" y="504" font-size="12" font-weight="normal" font-style="normal" fill="#ffffff" textLength="48.85" lengthAdjust="spacingAndGlyphs">Подпитка</text>
<text x="393.0" y="478" font-size="14" font-weight="bold" font-style="normal" fill="#ffffff" textLength="22.34" lengthAdjust="spacingAndGlyphs">326</text>
<rect x="336" y="501" width="29" height="1" fill="#ffffff"/>
<rect x="364" y="461" width="1" height="41" fill="#ffffff"/>
<use href="#valve" x="348" y="501"/>
<rect x="336" y="461" width="150" height="1" fill="#ffffff"/>
<rect x="440" y="461" width="1" height="41" fill="#ffffff"/>
<rect x="440" y="501" width="46" height="1" fill="#ffffff"/>
<use href="#valve" x="472" y="461"/>
<use href="#valve" x="472" y="501"/>
<rect x="508" y="441" width="1" height="9" fill="#ffffff"/>
<rect x="508" y="441" width="45" height="1" fill="#ffffff"/>
<rect x="508" y="481" width="1" height="9" fill="#ffffff"/>
<rect x="508" y="481" width="45" height="1" fill="#ffffff"/>
<rect x="552" y="441" width="1" height="41" fill="#ffffff"/>
<use href="#valve" x="528" y="441"/>
<use href="#valve" x="528" y="481"/>
<use href="#pump" x="485" y="450"/>
<use href="#pump" x="485" y="490"/>
<text x="518.0" y="466" font-size="13" font-weight="bold" font-style="normal" fill="#ffffff" textLength="22.69" lengthAdjust="spacingAndGlyphs">305</text>
<text x="518.0" y="506" font-size="13" font-weight="bold" font-style="normal" fill="#ffffff" textLength="23.77" lengthAdjust="spacingAndGlyphs">306</text>
<use href="#dot" x="372" y="461"/>
<rect x="372" y="449" width="1" height="13" fill="#ffffff"/>
<use href="#g0" x="371" y="424"/>
<use href="#gt" x="381" y="448"/>
<use href="#dot" x="428" y="461"/>
<rect x="428" y="449" width="1" height="13" fill="#ffffff"/>
<use href="#g0" x="427" y="424"/>
<use href="#gP" x="433" y="447"/>
<text x="601.0" y="475" font-size="14" font-weight="bold" font-style="normal" fill="#ffffff" textLength="21.33" lengthAdjust="spacingAndGlyphs">325</text>
<rect x="333" y="408" width="372" height="1" fill="#ffffff"/>
<rect x="552" y="457" width="153" height="1" fill="#ffffff"/>
<use href="#dot" x="612" y="408"/>
<rect x="612" y="396" width="1" height="13" fill="#ffffff"/>
<use href="#g0" x="611" y="371"/>
<use href="#gt" x="621" y="395"/>
<use href="#dot" x="612" y="457"/>
<rect x="612" y="445" width="1" height="13" fill="#ffffff"/>
<use href="#g0" x="611" y="420"/>
<use href="#gP" x="617" y="443"/>
<rect x="704.5" y="402.5" width="39" height="61" fill="none" stroke="#ffffff" stroke-width="1"/>
<g fill="#fff"><rect x="705" y="408" width="3" height="1"/><rect x="740" y="408" width="3" height="1"/><rect x="708" y="409" width="2" height="1"/><rect x="738" y="409" width="2" height="1"/><rect x="710" y="410" width="2" height="1"/><rect x="736" y="410" width="2" height="1"/><rect x="712" y="411" width="2" height="1"/><rect x="734" y="411" width="2" height="1"/><rect x="714" y="412" width="2" height="1"/><rect x="732" y="412" width="2" height="1"/><rect x="716" y="413" width="2" height="1"/><rect x="730" y="413" width="2" height="1"/><rect x="714" y="414" width="2" height="1"/><rect x="732" y="414" width="2" height="1"/><rect x="712" y="415" width="2" height="1"/><rect x="734" y="415" width="2" height="1"/><rect x="710" y="416" width="2" height="1"/><rect x="736" y="416" width="2" height="1"/><rect x="708" y="417" width="2" height="1"/><rect x="738" y="417" width="2" height="1"/><rect x="710" y="418" width="2" height="1"/><rect x="736" y="418" width="2" height="1"/><rect x="712" y="419" width="2" height="1"/><rect x="734" y="419" width="2" height="1"/><rect x="714" y="420" width="2" height="1"/><rect x="732" y="420" width="2" height="1"/><rect x="716" y="421" width="2" height="1"/><rect x="730" y="421" width="2" height="1"/><rect x="714" y="422" width="2" height="1"/><rect x="732" y="422" width="2" height="1"/><rect x="712" y="423" width="2" height="1"/><rect x="734" y="423" width="2" height="1"/><rect x="710" y="424" width="2" height="1"/><rect x="736" y="424" width="2" height="1"/><rect x="708" y="425" width="2" height="1"/><rect x="738" y="425" width="2" height="1"/><rect x="710" y="426" width="2" height="1"/><rect x="736" y="426" width="2" height="1"/><rect x="712" y="427" width="2" height="1"/><rect x="734" y="427" width="2" height="1"/><rect x="714" y="428" width="2" height="1"/><rect x="732" y="428" width="2" height="1"/><rect x="716" y="429" width="2" height="1"/><rect x="730" y="429" width="2" height="1"/><rect x="714" y="430" width="2" height="1"/><rect x="732" y="430" width="2" height="1"/><rect x="712" y="431" width="2" height="1"/><rect x="734" y="431" width="2" height="1"/><rect x="710" y="432" width="2" height="1"/><rect x="736" y="432" width="2" height="1"/><rect x="708" y="433" width="2" height="1"/><rect x="738" y="433" width="2" height="1"/><rect x="710" y="434" width="2" height="1"/><rect x="736" y="434" width="2" height="1"/><rect x="712" y="435" width="2" height="1"/><rect x="734" y="435" width="2" height="1"/><rect x="714" y="436" width="2" height="1"/><rect x="732" y="436" width="2" height="1"/><rect x="716" y="437" width="2" height="1"/><rect x="730" y="437" width="2" height="1"/><rect x="714" y="438" width="2" height="1"/><rect x="732" y="438" width="2" height="1"/><rect x="712" y="439" width="2" height="1"/><rect x="734" y="439" width="2" height="1"/><rect x="710" y="440" width="2" height="1"/><rect x="736" y="440" width="2" height="1"/><rect x="708" y="441" width="2" height="1"/><rect x="738" y="441" width="2" height="1"/><rect x="710" y="442" width="2" height="1"/><rect x="736" y="442" width="2" height="1"/><rect x="712" y="443" width="2" height="1"/><rect x="734" y="443" width="2" height="1"/><rect x="714" y="444" width="2" height="1"/><rect x="732" y="444" width="2" height="1"/><rect x="716" y="445" width="2" height="1"/><rect x="730" y="445" width="2" height="1"/><rect x="714" y="446" width="2" height="1"/><rect x="732" y="446" width="2" height="1"/><rect x="712" y="447" width="2" height="1"/><rect x="734" y="447" width="2" height="1"/><rect x="710" y="448" width="2" height="1"/><rect x="736" y="448" width="2" height="1"/><rect x="708" y="449" width="2" height="1"/><rect x="738" y="449" width="2" height="1"/><rect x="710" y="450" width="2" height="1"/><rect x="736" y="450" width="2" height="1"/><rect x="712" y="451" width="2" height="1"/><rect x="734" y="451" width="2" height="1"/><rect x="714" y="452" width="2" height="1"/><rect x="732" y="452" width="2" height="1"/><rect x="716" y="453" width="2" height="1"/><rect x="730" y="453" width="2" height="1"/><rect x="714" y="454" width="2" height="1"/><rect x="732" y="454" width="2" height="1"/><rect x="712" y="455" width="2" height="1"/><rect x="734" y="455" width="2" height="1"/><rect x="710" y="456" width="2" height="1"/><rect x="736" y="456" width="2" height="1"/><rect x="705" y="457" width="5" height="1"/><rect x="738" y="457" width="5" height="1"/></g>
<use href="#valve" x="692" y="408"/>
<use href="#valve" x="692" y="457"/>
<rect x="743" y="408" width="170" height="1" fill="#ffffff"/>
<rect x="743" y="457" width="162" height="1" fill="#ffffff"/>
<use href="#valve" x="756" y="408"/>
<use href="#valve" x="756" y="457"/>
<rect x="800" y="396" width="1" height="12" fill="#ffffff"/>
<rect x="796" y="391" width="9" height="5" fill="#ffffff"/>
<use href="#valve" x="800" y="408"/>
<use href="#sw" x="0" y="395"/>
<use href="#sw" x="0" y="423"/>
<text x="789.0" y="430" font-size="14" font-weight="bold" font-style="normal" fill="#ffffff" textLength="22.59" lengthAdjust="spacingAndGlyphs">311</text>
<text x="850.0" y="399" font-size="12" font-weight="bold" font-style="normal" fill="#ffffff" textLength="37.03" lengthAdjust="spacingAndGlyphs">Откр.</text>
<text x="850.0" y="427" font-size="12" font-weight="bold" font-style="normal" fill="#ffffff" textLength="37.05" lengthAdjust="spacingAndGlyphs">Закр.</text>
<text x="272.1" y="542" font-size="12" font-weight="normal" font-style="normal" fill="#ffffff" textLength="20.61" lengthAdjust="spacingAndGlyphs">ГВС</text>
<text x="272.02" y="556" font-size="12" font-weight="normal" font-style="normal" fill="#ffffff" textLength="44.0" lengthAdjust="spacingAndGlyphs">замочки</text>
<rect x="164" y="597" width="322" height="1" fill="#ffffff"/>
<rect x="440" y="597" width="1" height="41" fill="#ffffff"/>
<rect x="440" y="637" width="46" height="1" fill="#ffffff"/>
<use href="#valve" x="472" y="597"/>
<use href="#valve" x="472" y="637"/>
<rect x="508" y="577" width="1" height="9" fill="#ffffff"/>
<rect x="508" y="577" width="45" height="1" fill="#ffffff"/>
<rect x="508" y="617" width="1" height="9" fill="#ffffff"/>
<rect x="508" y="617" width="45" height="1" fill="#ffffff"/>
<rect x="552" y="577" width="1" height="41" fill="#ffffff"/>
<use href="#valve" x="528" y="577"/>
<use href="#valve" x="528" y="617"/>
<use href="#pump" x="485" y="586"/>
<use href="#pump" x="485" y="626"/>
<text x="518.0" y="602" font-size="13" font-weight="bold" font-style="normal" fill="#ffffff" textLength="23.77" lengthAdjust="spacingAndGlyphs">307</text>
<text x="518.0" y="642" font-size="13" font-weight="bold" font-style="normal" fill="#ffffff" textLength="22.69" lengthAdjust="spacingAndGlyphs">308</text>
<text x="601.0" y="611" font-size="14" font-weight="bold" font-style="normal" fill="#ffffff" textLength="21.33" lengthAdjust="spacingAndGlyphs">327</text>
<rect x="336" y="544" width="369" height="1" fill="#ffffff"/>
<rect x="552" y="593" width="153" height="1" fill="#ffffff"/>
<use href="#dot" x="612" y="544"/>
<rect x="612" y="532" width="1" height="13" fill="#ffffff"/>
<use href="#g0" x="611" y="507"/>
<use href="#gt" x="621" y="531"/>
<use href="#dot" x="612" y="593"/>
<rect x="612" y="581" width="1" height="13" fill="#ffffff"/>
<use href="#g0" x="611" y="556"/>
<use href="#gP" x="617" y="579"/>
<rect x="704.5" y="538.5" width="39" height="61" fill="none" stroke="#ffffff" stroke-width="1"/>
<g fill="#fff"><rect x="705" y="544" width="3" height="1"/><rect x="740" y="544" width="3" height="1"/><rect x="708" y="545" width="2" height="1"/><rect x="738" y="545" width="2" height="1"/><rect x="710" y="546" width="2" height="1"/><rect x="736" y="546" width="2" height="1"/><rect x="712" y="547" width="2" height="1"/><rect x="734" y="547" width="2" height="1"/><rect x="714" y="548" width="2" height="1"/><rect x="732" y="548" width="2" height="1"/><rect x="716" y="549" width="2" height="1"/><rect x="730" y="549" width="2" height="1"/><rect x="714" y="550" width="2" height="1"/><rect x="732" y="550" width="2" height="1"/><rect x="712" y="551" width="2" height="1"/><rect x="734" y="551" width="2" height="1"/><rect x="710" y="552" width="2" height="1"/><rect x="736" y="552" width="2" height="1"/><rect x="708" y="553" width="2" height="1"/><rect x="738" y="553" width="2" height="1"/><rect x="710" y="554" width="2" height="1"/><rect x="736" y="554" width="2" height="1"/><rect x="712" y="555" width="2" height="1"/><rect x="734" y="555" width="2" height="1"/><rect x="714" y="556" width="2" height="1"/><rect x="732" y="556" width="2" height="1"/><rect x="716" y="557" width="2" height="1"/><rect x="730" y="557" width="2" height="1"/><rect x="714" y="558" width="2" height="1"/><rect x="732" y="558" width="2" height="1"/><rect x="712" y="559" width="2" height="1"/><rect x="734" y="559" width="2" height="1"/><rect x="710" y="560" width="2" height="1"/><rect x="736" y="560" width="2" height="1"/><rect x="708" y="561" width="2" height="1"/><rect x="738" y="561" width="2" height="1"/><rect x="710" y="562" width="2" height="1"/><rect x="736" y="562" width="2" height="1"/><rect x="712" y="563" width="2" height="1"/><rect x="734" y="563" width="2" height="1"/><rect x="714" y="564" width="2" height="1"/><rect x="732" y="564" width="2" height="1"/><rect x="716" y="565" width="2" height="1"/><rect x="730" y="565" width="2" height="1"/><rect x="714" y="566" width="2" height="1"/><rect x="732" y="566" width="2" height="1"/><rect x="712" y="567" width="2" height="1"/><rect x="734" y="567" width="2" height="1"/><rect x="710" y="568" width="2" height="1"/><rect x="736" y="568" width="2" height="1"/><rect x="708" y="569" width="2" height="1"/><rect x="738" y="569" width="2" height="1"/><rect x="710" y="570" width="2" height="1"/><rect x="736" y="570" width="2" height="1"/><rect x="712" y="571" width="2" height="1"/><rect x="734" y="571" width="2" height="1"/><rect x="714" y="572" width="2" height="1"/><rect x="732" y="572" width="2" height="1"/><rect x="716" y="573" width="2" height="1"/><rect x="730" y="573" width="2" height="1"/><rect x="714" y="574" width="2" height="1"/><rect x="732" y="574" width="2" height="1"/><rect x="712" y="575" width="2" height="1"/><rect x="734" y="575" width="2" height="1"/><rect x="710" y="576" width="2" height="1"/><rect x="736" y="576" width="2" height="1"/><rect x="708" y="577" width="2" height="1"/><rect x="738" y="577" width="2" height="1"/><rect x="710" y="578" width="2" height="1"/><rect x="736" y="578" width="2" height="1"/><rect x="712" y="579" width="2" height="1"/><rect x="734" y="579" width="2" height="1"/><rect x="714" y="580" width="2" height="1"/><rect x="732" y="580" width="2" height="1"/><rect x="716" y="581" width="2" height="1"/><rect x="730" y="581" width="2" height="1"/><rect x="714" y="582" width="2" height="1"/><rect x="732" y="582" width="2" height="1"/><rect x="712" y="583" width="2" height="1"/><rect x="734" y="583" width="2" height="1"/><rect x="710" y="584" width="2" height="1"/><rect x="736" y="584" width="2" height="1"/><rect x="708" y="585" width="2" height="1"/><rect x="738" y="585" width="2" height="1"/><rect x="710" y="586" width="2" height="1"/><rect x="736" y="586" width="2" height="1"/><rect x="712" y="587" width="2" height="1"/><rect x="734" y="587" width="2" height="1"/><rect x="714" y="588" width="2" height="1"/><rect x="732" y="588" width="2" height="1"/><rect x="716" y="589" width="2" height="1"/><rect x="730" y="589" width="2" height="1"/><rect x="714" y="590" width="2" height="1"/><rect x="732" y="590" width="2" height="1"/><rect x="712" y="591" width="2" height="1"/><rect x="734" y="591" width="2" height="1"/><rect x="710" y="592" width="2" height="1"/><rect x="736" y="592" width="2" height="1"/><rect x="705" y="593" width="5" height="1"/><rect x="738" y="593" width="5" height="1"/></g>
<use href="#valve" x="692" y="544"/>
<use href="#valve" x="692" y="593"/>
<rect x="743" y="544" width="170" height="1" fill="#ffffff"/>
<rect x="743" y="593" width="162" height="1" fill="#ffffff"/>
<use href="#valve" x="756" y="544"/>
<use href="#valve" x="756" y="593"/>
<rect x="800" y="532" width="1" height="12" fill="#ffffff"/>
<rect x="796" y="527" width="9" height="5" fill="#ffffff"/>
<use href="#valve" x="800" y="544"/>
<use href="#sw" x="0" y="531"/>
<use href="#sw" x="0" y="559"/>
<text x="789.0" y="566" font-size="14" font-weight="bold" font-style="normal" fill="#ffffff" textLength="22.34" lengthAdjust="spacingAndGlyphs">312</text>
<text x="850.0" y="535" font-size="12" font-weight="bold" font-style="normal" fill="#ffffff" textLength="37.03" lengthAdjust="spacingAndGlyphs">Откр.</text>
<text x="850.0" y="563" font-size="12" font-weight="bold" font-style="normal" fill="#ffffff" textLength="37.05" lengthAdjust="spacingAndGlyphs">Закр.</text>
<rect x="904" y="232" width="1" height="409" fill="#ffffff"/>
<rect x="912" y="189" width="1" height="452" fill="#ffffff"/>
<rect x="24" y="385" width="173" height="1" fill="#ffffff"/>
<rect x="196" y="385" width="1" height="213" fill="#ffffff"/>
<rect x="122" y="385" width="1" height="50" fill="#ffffff"/>
<rect x="122" y="467" width="1" height="12" fill="#ffffff"/>
<rect x="88" y="435" width="68" height="1" fill="#d8c2b2"/><rect x="88" y="435" width="1" height="31" fill="#d8c2b2"/>
<rect x="88" y="466" width="69" height="1" fill="#fff"/><rect x="156" y="435" width="1" height="32" fill="#fff"/>
<rect x="89" y="436" width="66" height="1" fill="#fff"/><rect x="89" y="436" width="1" height="29" fill="#fff"/>
<rect x="89" y="465" width="67" height="1" fill="#d8c2b2"/><rect x="155" y="436" width="1" height="30" fill="#d8c2b2"/>
<text x="98.0" y="449" font-size="12" font-weight="normal" font-style="normal" fill="#ffffff" textLength="51.68" lengthAdjust="spacingAndGlyphs">Обратный</text>
<text x="107.0" y="462" font-size="12" font-weight="normal" font-style="normal" fill="#ffffff" textLength="31.57" lengthAdjust="spacingAndGlyphs">осмос</text>
<polygon points="86,494 101,479 164,479 149,494" fill="#419896"/>
<rect x="86" y="494" width="63" height="129" fill="#55c3c1"/>
<polygon points="149,494 164,479 164,608 149,623" fill="#5fdede"/>
<polygon points="86,623 149,623 128,634 107,634" fill="#419896"/>
<circle cx="119" cy="503" r="4.5" fill="#00ffff" stroke="#000" stroke-width="1"/>
<circle cx="119" cy="515" r="4.5" fill="#00ffff" stroke="#000" stroke-width="1"/>
<circle cx="119" cy="614" r="4.5" fill="#00ffff" stroke="#000" stroke-width="1"/>
<use href="#valve" x="180" y="597"/>
<g>
<rect x="8" y="30" width="33" height="7" fill="url(#dith)"/>
<rect x="8" y="29" width="10" height="1" fill="#000"/><rect x="32" y="29" width="8" height="1" fill="#000"/>
<rect x="17" y="5" width="16" height="25" fill="#000"/>
<rect x="18" y="6" width="14" height="23" fill="#6e8497"/>
<rect x="33" y="7" width="1" height="22" fill="#8a9caf"/>
<polygon points="24,12 31,6 33,6 33,29 26,36 24,36" fill="#000"/>
<polygon points="25,13 31,7 32,7 32,29 26,35 25,35" fill="#d88a3c"/>
<polygon points="25,13 31,7 32,7 26,13 26,35 25,35" fill="#f4d8a8"/>
<rect x="27" y="21" width="2" height="2" fill="#1f6f80"/><rect x="27" y="22" width="1" height="1" fill="#cfe"/>
</g>
<g>
<polygon points="72,10 88,10 90,12 90,15 79,26 64,26 64,21 71,14 72,12" fill="#fff" opacity="0.6"/>
<polygon points="72.5,11 88,11 89.5,12.5 89.5,15 78.5,25.5 65,25.5 65,21.5 71.5,15" fill="#000"/>
<polygon points="72,14 87,14 78,23 67,23 67,21" fill="#7a8898"/>
<rect x="72" y="13" width="14" height="1" fill="#00e000"/><polygon points="86,13 87,13 88,15 87,15" fill="#00e000"/>
<rect x="67" y="21" width="10" height="1" fill="#000"/>
<polygon points="81,17 84,15 80,21 77,23" fill="#9aa8b8"/>
<polygon points="66,23 77,23 78,25 67,25" fill="#7a8898"/>
<polygon points="69,24 72,24 64,34 61,34" fill="#000"/>
<polygon points="70,24 71,24 63,33 62,33" fill="#7a8898"/>
</g>
<g>
<rect x="118" y="10" width="18" height="6" rx="2" fill="#555"/>
<rect x="119" y="12" width="16" height="3" fill="#fff"/>
<rect x="120" y="13" width="1" height="1" fill="#444"/><rect x="122" y="13" width="1" height="1" fill="#444"/><rect x="124" y="13" width="1" height="1" fill="#444"/><rect x="126" y="13" width="1" height="1" fill="#444"/><rect x="128" y="13" width="1" height="1" fill="#444"/><rect x="130" y="13" width="1" height="1" fill="#444"/><rect x="132" y="13" width="1" height="1" fill="#444"/>
<polygon points="113,17 126,17 127,18 127,20 118,28 111,28 106,25 106,24" fill="#555"/>
<polygon points="113,18 125,18 118,24 108,24" fill="#e4e4e4"/>
<polygon points="125,19 126,19 126,20 118,27 117,27" fill="#eee"/>
<polygon points="108,25 116,25 115,27 111,27 108,26" fill="#eee"/>
<polygon points="110,27 112,27 107,34 105,34" fill="#666"/>
<polygon points="113,27 114,27 109,33 108,33" fill="#888"/>
</g>
<g>
<circle cx="178" cy="22" r="6.5" fill="#a8a8a8"/>
<polygon points="151,21 170,21 170,25 157,25" fill="#a8a8a8"/>
<circle cx="176.5" cy="19.3" r="6.8" fill="#f0f0f0" stroke="#555" stroke-width="1.2"/>
<polygon points="149.5,17.5 163,17.5 164,15.5 166,15.5 167,17.5 170,17.5 170,21.5 152,21.5 149.5,19.5" fill="#fafafa" stroke="#555" stroke-width="1"/>
<rect x="153" y="22" width="3" height="1" fill="#fff"/><rect x="158" y="22" width="5" height="1" fill="#fff"/>
<rect x="174.5" y="17" width="4" height="4.5" rx="1.5" fill="#aaa" stroke="#555" stroke-width="1"/>
</g>
<g>
<rect x="200.5" y="6.5" width="3" height="14" fill="#f0f0f0" stroke="#000"/>
<rect x="199.5" y="9.5" width="5" height="2" fill="#f0f0f0" stroke="#000"/>
<rect x="198.5" y="20.5" width="7" height="14" rx="2" fill="#b85a2a" stroke="#000"/>
<rect x="200" y="22" width="1" height="10" fill="#000"/><rect x="203" y="22" width="1" height="10" fill="#000"/>
<rect x="211.5" y="20.5" width="7" height="14" rx="2" fill="#b85a2a" stroke="#000"/>
<rect x="213" y="22" width="1" height="10" fill="#000"/><rect x="216" y="22" width="1" height="10" fill="#000"/>
<rect x="213.5" y="11.5" width="3" height="9" fill="#f0f0f0" stroke="#000"/>
<polygon points="206.5,6.5 208.5,6.5 208.5,7.5 219,7.5 223.5,12 223.5,13.5 221.5,13.5 218,10.5 208.5,10.5 208.5,11.5 206.5,11.5" fill="#eee" stroke="#000"/>
<rect x="213" y="8" width="4" height="2" fill="#1030ff"/>
</g>
<g>
<polygon points="269,5 281,16 261,34 249,23" fill="#fff" stroke="#555" stroke-width="1"/>
<polyline points="250,23 261,12 262,12 269,5" fill="none" stroke="#888" stroke-width="2" stroke-dasharray="1 1"/>
<line x1="259" y1="14" x2="277" y2="29" stroke="#555"/>
<rect x="254" y="22" width="1" height="1" fill="#777"/><rect x="256" y="24" width="1" height="1" fill="#777"/>
<line x1="255" y1="24" x2="258" y2="21" stroke="#777"/><line x1="257" y1="26" x2="260" y2="23" stroke="#777"/><line x1="259" y1="28" x2="262" y2="25" stroke="#777"/><line x1="261" y1="30" x2="264" y2="27" stroke="#777"/>
<polygon points="265.5,20.5 268.5,17.5 273.5,17.5 278.5,22.5 280.5,22.5 280.5,29.5 277.5,29.5 277.5,27.5 269.5,27.5 265.5,23.5" fill="#e8e8e8" stroke="#555"/>
<circle cx="269" cy="21.5" r="1.5" fill="#fff" stroke="#555"/>
<line x1="270" y1="22.5" x2="274" y2="22.5" stroke="#555"/>
<rect x="280" y="22" width="2" height="8" fill="#666"/>
</g>
<g>
<defs><linearGradient id="wg" x1="0" y1="0" x2="0" y2="1"><stop offset="0" stop-color="#d2d2d2"/><stop offset="1" stop-color="#a8a8a8"/></linearGradient>
<linearGradient id="bg2" x1="0" y1="0" x2="0" y2="1"><stop offset="0" stop-color="#777"/><stop offset="1" stop-color="#ddd"/></linearGradient>
<linearGradient id="tg" x1="0" y1="0" x2="1" y2="0"><stop offset="0" stop-color="#8a8a8a"/><stop offset="0.5" stop-color="#c4c4c4"/><stop offset="1" stop-color="#909090"/></linearGradient></defs>
<polygon points="307,7 311,7 323,31 322,33 296,33 295,31" fill="url(#wg)"/>
<polygon points="309,15 316,29 302,29" fill="#fff"/>
<rect x="308" y="18" width="2" height="7" fill="#666"/>
<rect x="308" y="26" width="2" height="2" fill="#555"/>
</g>
<g>
<rect x="341" y="6" width="1" height="27" fill="#888"/>
<polygon points="339,8 341.5,5 344,8" fill="#888"/>
<rect x="337" y="28" width="31" height="1" fill="#888"/>
<polygon points="366,26 369,28.5 366,31" fill="#888"/>
<rect x="337" y="14" width="32" height="1" fill="#c8c8c8"/>
<rect x="337" y="21" width="32" height="1" fill="#cdcdcd"/>
<rect x="337" y="14" width="8" height="1" fill="#8a8a8a"/><rect x="337" y="21" width="8" height="1" fill="#8a8a8a"/>
<rect x="344" y="24" width="2" height="4" fill="url(#bg2)"/>
<rect x="347" y="17" width="2" height="11" fill="url(#bg2)"/>
<rect x="350" y="13" width="2" height="15" fill="url(#bg2)"/>
<rect x="353" y="11" width="2" height="17" fill="url(#bg2)"/>
<rect x="356" y="18" width="2" height="10" fill="url(#bg2)"/>
<rect x="359" y="20" width="2" height="8" fill="url(#bg2)"/>
<rect x="362" y="18" width="2" height="10" fill="url(#bg2)"/>
<rect x="344" y="29" width="20" height="3" fill="#e6e6e6"/>
</g>
<g>
<rect x="383" y="9" width="29" height="23" rx="1" fill="#9a9a9a"/>
<rect x="384" y="10" width="27" height="8" fill="url(#tg)"/>
<rect x="386" y="11" width="2" height="4" fill="#eee"/>
<rect x="384" y="19" width="27" height="12" fill="#f6f6f6"/>
<g fill="#666">
<rect x="385" y="20" width="4" height="1"/><rect x="392" y="20" width="2" height="1"/><rect x="395" y="20" width="5" height="1"/><rect x="402" y="19" width="4" height="2" fill="#bbb"/><rect x="409" y="20" width="1" height="1"/>
<rect x="385" y="23" width="2" height="1"/><rect x="392" y="23" width="2" height="1"/><rect x="395" y="23" width="5" height="1"/><rect x="404" y="23" width="1" height="1"/><rect x="409" y="23" width="1" height="1"/>
<rect x="385" y="26" width="3" height="1"/><rect x="392" y="26" width="2" height="1"/><rect x="395" y="26" width="5" height="1"/><rect x="402" y="25" width="4" height="2" fill="#bbb"/><rect x="409" y="26" width="1" height="1"/>
<rect x="385" y="29" width="3" height="1"/><rect x="392" y="29" width="5" height="1"/><rect x="404" y="29" width="1" height="1"/><rect x="409" y="29" width="1" height="1"/>
</g>
</g>

</g></svg></body></html>
